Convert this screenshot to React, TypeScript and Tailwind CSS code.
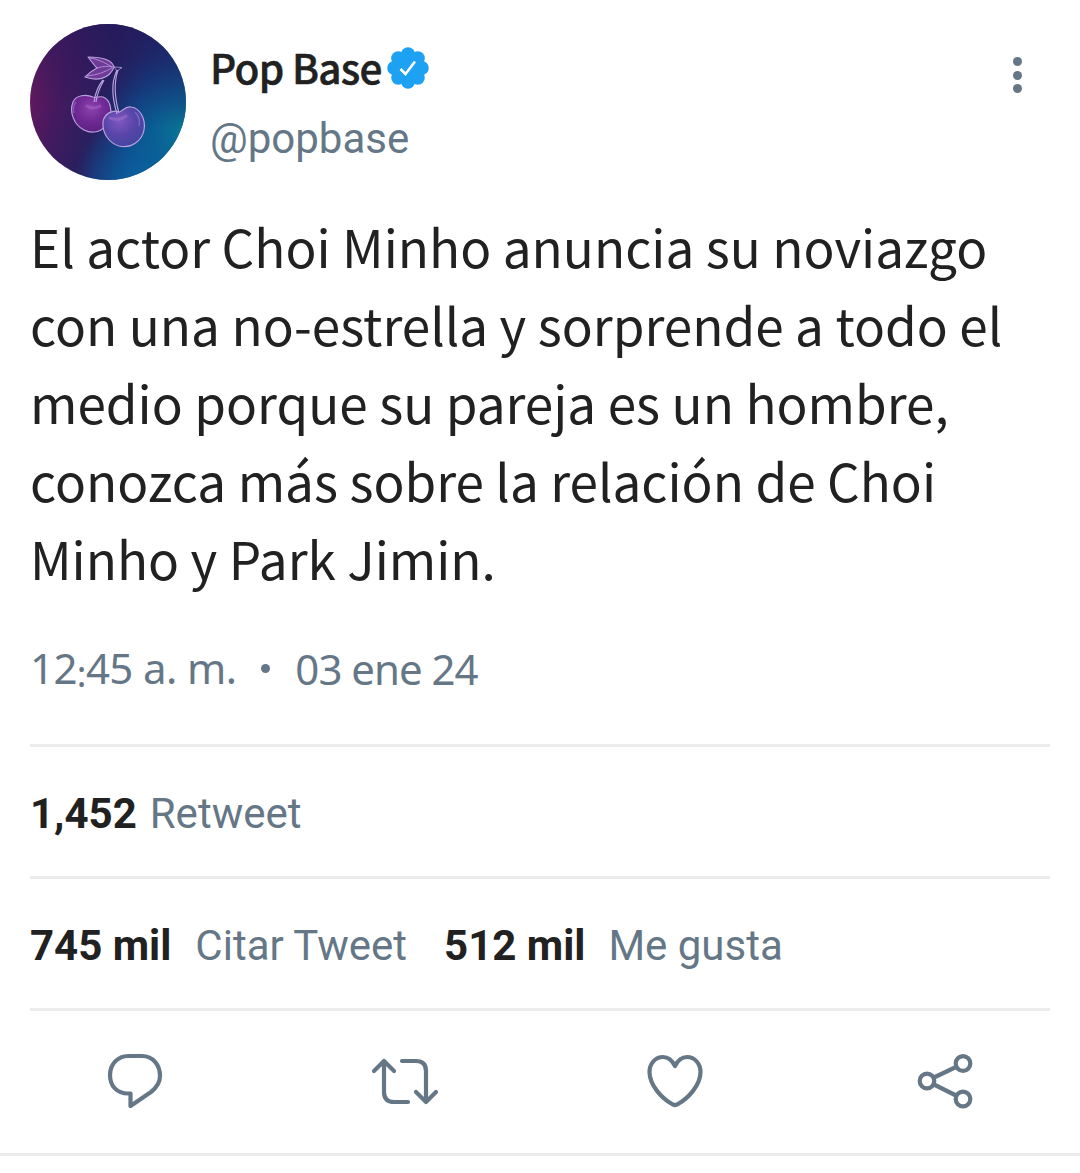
import type { ReactNode } from 'react';

function Avatar() {
  return (
    <svg viewBox="0 0 156 156" className="h-[156px] w-[156px] shrink-0 rounded-full">
      <defs>
        <linearGradient id="bg" x1="0" y1="0.38" x2="1" y2="0.68">
          <stop offset="0" stopColor="#66195f" />
          <stop offset="0.2" stopColor="#45195f" />
          <stop offset="0.45" stopColor="#28205f" />
          <stop offset="0.68" stopColor="#123c80" />
          <stop offset="1" stopColor="#085a90" />
        </linearGradient>
        <radialGradient id="teal" cx="1" cy="0.68" r="0.5">
          <stop offset="0" stopColor="#0a7c94" stopOpacity="0.9" />
          <stop offset="0.45" stopColor="#08689a" stopOpacity="0.6" />
          <stop offset="1" stopColor="#0860a0" stopOpacity="0" />
        </radialGradient>
        <radialGradient id="blue" cx="0.68" cy="1" r="0.4">
          <stop offset="0" stopColor="#0a68a6" stopOpacity="0.8" />
          <stop offset="1" stopColor="#0a60a0" stopOpacity="0" />
        </radialGradient>
        <linearGradient id="night" x1="0.6" y1="0" x2="0.5" y2="0.6">
          <stop offset="0" stopColor="#24195a" stopOpacity="0.8" />
          <stop offset="1" stopColor="#24195a" stopOpacity="0" />
        </linearGradient>
        <radialGradient id="cherryLeft" cx="0.5" cy="0.35" r="0.7">
          <stop offset="0" stopColor="#8d42ae" />
          <stop offset="0.5" stopColor="#702a94" />
          <stop offset="1" stopColor="#582080" />
        </radialGradient>
        <radialGradient id="cherryRight" cx="0.4" cy="0.35" r="0.75">
          <stop offset="0" stopColor="#8058c0" />
          <stop offset="0.5" stopColor="#5845a8" />
          <stop offset="1" stopColor="#3d46a0" />
        </radialGradient>
      </defs>
      <rect width="156" height="156" fill="url(#bg)" />
      <rect width="156" height="156" fill="url(#blue)" />
      <rect width="156" height="156" fill="url(#teal)" />
      <rect width="156" height="156" fill="url(#night)" />
      <g stroke="#b9a0dc" strokeWidth="1.2" strokeLinejoin="round">
        <path d="M63 73C56 70 46 71 43 78C39 88 44 101 54 106C62 110 71 108 75 102L81 90C81 82 79 75 73 73C69 72 66 74 63 73Z" fill="url(#cherryLeft)" />
        <path d="M89 88C83 85 74 90 73 98C72 109 79 119 89 122C101 125 112 117 114 106C116 95 110 84 101 83C95 82 92 88 89 88Z" fill="url(#cherryRight)" />
        <path d="M64 78C65 71 68 62 73 56M66 78C67 70 70 63 74 56" fill="none" />
        <path d="M87 90C83 76 80 61 87 46M89 89C85 75 83 61 88 46" fill="none" />
        <path d="M84 43C82 36 74 33 58 33C61 37 64 41 67 44C61 47 57 51 55 53C66 57 79 56 84 43Z" fill="#703a98" />
        <path d="M67 44C73 42 78 42 84 43L92 43.5L87 47L84 43M60 34C67 35 74 38 82 43M57 52C67 51 75 48 82 44" fill="none" strokeWidth="0.8" />
      </g>
      <path d="M57 82C60 84 65 85 70 82" fill="none" stroke="#ae72c8" strokeWidth="3" opacity="0.45" strokeLinecap="round" />
      <path d="M80 94C84 96 91 96 96 92" fill="none" stroke="#a77bd0" strokeWidth="3" opacity="0.45" strokeLinecap="round" />
      <path d="M46 78Q42 83 44 89M105 88Q111 94 109 102" fill="none" stroke="#b597dc" strokeWidth="1.5" opacity="0.4" />
    </svg>
  );
}

function VerifiedBadge() {
  return (
    <svg viewBox="0 0 42 42" className="h-[42px] w-[42px]">
      <g fill="#1da1f2">
        <circle cx="21" cy="21" r="16" />
        <circle cx="21" cy="7.2" r="7" />
        <circle cx="30.8" cy="11.2" r="7" />
        <circle cx="34.8" cy="21" r="7" />
        <circle cx="30.8" cy="30.8" r="7" />
        <circle cx="21" cy="34.8" r="7" />
        <circle cx="11.2" cy="30.8" r="7" />
        <circle cx="7.2" cy="21" r="7" />
        <circle cx="11.2" cy="11.2" r="7" />
      </g>
      <path d="M13.5 22L18.5 27L28 14.5" fill="none" stroke="#fff" strokeWidth="2.6" />
    </svg>
  );
}

function ActionIcon({ label, children }: { label: string; children: ReactNode }) {
  return (
    <button aria-label={label} className="flex justify-center">
      <svg
        viewBox="0 0 90 80"
        className="h-20 w-[90px]"
        fill="none"
        stroke="#657786"
        strokeWidth="4.2"
        strokeLinecap="round"
        strokeLinejoin="round"
      >
        {children}
      </svg>
    </button>
  );
}

export default function App() {
  return (
    <main className="h-[1173px] w-[1080px] overflow-hidden bg-white text-[#212121]">
      <article className="h-[1156px] border-b-[3px] border-[#ebebeb] pt-6">
        <div className="px-[30px]">
          <header className="flex h-[156px]">
            <Avatar />
            <div className="ml-6 flex-1">
              <div className="flex h-[88px] items-center">
                <h1 className="pb-0.5 font-['Noto_Sans_CJK_SC',sans-serif] text-[40.5px] leading-none font-medium tracking-[-0.7px] [-webkit-text-stroke:0.5px]">
                  Pop Base
                </h1>
                <div className="ml-[5px]">
                  <VerifiedBadge />
                </div>
              </div>
              <p className="pt-[5px] font-[Roboto,sans-serif] text-[42px] leading-[44px] text-[#657786]">@popbase</p>
            </div>
            <button aria-label="Más opciones" className="mt-[33px] mr-7 flex h-9 flex-col justify-between self-start">
              <span className="h-[9px] w-[9px] rounded-full bg-[#657786]" />
              <span className="h-[9px] w-[9px] rounded-full bg-[#657786]" />
              <span className="h-[9px] w-[9px] rounded-full bg-[#657786]" />
            </button>
          </header>

          <p className="mt-[27px] font-['Noto_Sans_CJK_SC',sans-serif] text-[51.25px] leading-[78px] whitespace-nowrap">
            El actor Choi Minho anuncia su noviazgo
            <br />
            con una no-estrella y sorprende a todo el
            <br />
            medio porque su pareja es un hombre,
            <br />
            conozca más sobre la relación de Choi
            <br />
            Minho y Park Jimin.
          </p>

          <div className="flex h-[150px] items-center border-b-[3px] border-[#ebebeb] pb-1 font-['Noto_Sans',sans-serif] text-[42px] tracking-[-1px] text-[#657786]">
            <span className="tracking-[-0.6px]">
              12<span className="align-[-3px] text-[36px]">:</span>45 a. m.
            </span>
            <span className="mr-[25px] ml-[25px] h-[9px] w-[9px] rounded-full bg-[#657786]" />
            <span>03 ene 24</span>
          </div>

          <div className="flex h-[132px] items-center border-b-[3px] border-[#ebebeb] pt-1 font-[Roboto,sans-serif] text-[42px]">
            <strong className="font-bold">1,452</strong>
            <span className="ml-[13px] text-[#657786]">Retweet</span>
          </div>

          <div className="flex h-[132px] items-center border-b-[3px] border-[#ebebeb] pt-1 font-[Roboto,sans-serif] text-[42px]">
            <strong className="font-bold">745 mil</strong>
            <span className="ml-6 text-[#657786]">Citar Tweet</span>
            <strong className="ml-[37px] font-bold">512 mil</strong>
            <span className="ml-[23px] text-[#657786]">Me gusta</span>
          </div>
        </div>

        <footer className="grid grid-cols-4 pt-[29px]">
          <ActionIcon label="Responder">
            <path d="M38 16H52C63 16 70 25 70 36C70 43 66 48 61 52L40.5 66V53.5H38C27 53.5 20 46 20 35C20 24 28 16 38 16Z" />
          </ActionIcon>
          <ActionIcon label="Retweet">
            <path d="M14 31L24 21L34 31M24 21V52Q24 62 34 62H48M42 21H56Q66 21 66 31V62M56 52L66 62L76 52" />
          </ActionIcon>
          <ActionIcon label="Me gusta">
            <path d="M45 26C42 20 38 17 33 17C25 17 19.5 24 19.5 32C19.5 46 33 59 42 64Q45 66 48 64C57 59 70.5 46 70.5 32C70.5 24 65 17 57 17C52 17 48 20 45 26Z" />
          </ActionIcon>
          <ActionIcon label="Compartir">
            <circle cx="27" cy="41" r="7.3" />
            <circle cx="63" cy="23.5" r="7.3" />
            <circle cx="63" cy="59" r="7.3" />
            <path d="M34 37.5L56 27M34 44.5L56 55.5" />
          </ActionIcon>
        </footer>
      </article>
    </main>
  );
}
